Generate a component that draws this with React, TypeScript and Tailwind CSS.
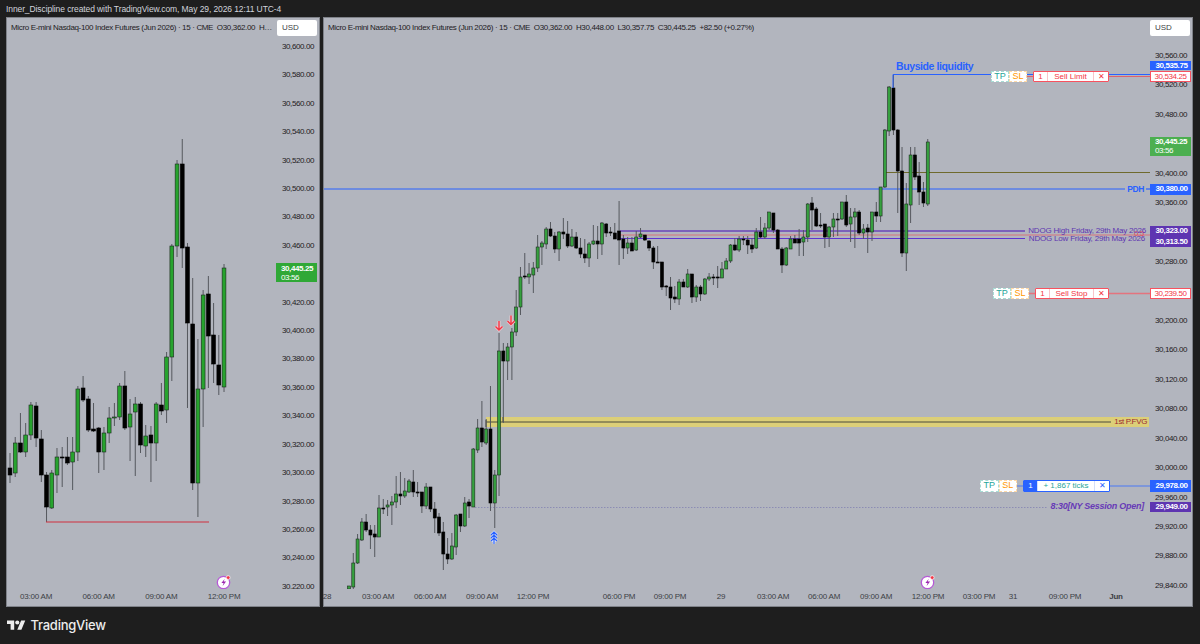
import React from "react";

// [bodyTop, bodyBottom, wickTop, wickBottom, up] in page pixels
type Candle = [number, number, number, number, number];

const leftCandles: Candle[] = [
  [468, 475, 453, 483, 0],
  [443, 473, 437, 477, 1],
  [443, 452, 413, 453, 0],
  [435, 452, 423, 457, 1],
  [405, 435, 402, 440, 1],
  [406, 438, 402, 447, 0],
  [439, 475, 430, 482, 0],
  [475, 507, 472, 522, 0],
  [473, 508, 470, 509, 1],
  [457, 475, 448, 493, 1],
  [457, 458, 447, 487, 0],
  [457, 463, 437, 465, 0],
  [452, 462, 437, 490, 1],
  [389, 452, 386, 461, 1],
  [388, 400, 376, 402, 0],
  [399, 430, 396, 432, 0],
  [429, 431, 403, 432, 0],
  [428, 452, 427, 473, 0],
  [433, 452, 427, 470, 1],
  [418, 433, 407, 443, 1],
  [417, 418, 403, 426, 1],
  [386, 417, 383, 420, 1],
  [386, 428, 371, 430, 0],
  [414, 427, 399, 461, 1],
  [404, 412, 397, 476, 1],
  [404, 445, 402, 453, 0],
  [436, 446, 425, 457, 1],
  [435, 443, 426, 482, 0],
  [404, 443, 402, 461, 1],
  [405, 411, 383, 415, 0],
  [357, 410, 352, 423, 1],
  [246, 357, 244, 381, 1],
  [164, 246, 160, 257, 1],
  [164, 248, 139, 268, 0],
  [247, 323, 243, 408, 0],
  [324, 483, 278, 490, 0],
  [389, 483, 339, 517, 1],
  [295, 389, 290, 427, 1],
  [294, 336, 276, 388, 0],
  [335, 364, 303, 383, 0],
  [365, 385, 335, 395, 0],
  [268, 387, 264, 392, 1],
];

const rightCandles: Candle[] = [
  [586, 589, 586, 589, 1], [563, 587, 553, 589, 1], [539, 563, 534, 564, 1], [522, 540, 518, 541, 1],
  [522, 530, 514, 532, 0], [530, 535, 525, 549, 0], [534, 537, 525, 557, 0], [508, 537, 495, 537, 1],
  [508, 509, 499, 514, 0], [505, 507, 500, 516, 1], [502, 505, 496, 525, 1], [494, 502, 476, 508, 1],
  [494, 496, 472, 505, 0], [491, 496, 478, 498, 1], [481, 492, 479, 493, 1], [482, 492, 470, 497, 0],
  [492, 493, 482, 497, 0], [492, 506, 492, 513, 0], [487, 506, 483, 509, 1], [487, 509, 487, 512, 0],
  [509, 518, 502, 533, 0], [517, 533, 513, 536, 0], [532, 554, 522, 570, 0], [554, 559, 538, 564, 0],
  [546, 559, 533, 560, 1], [515, 547, 514, 555, 1], [514, 526, 514, 532, 0], [503, 526, 497, 527, 1],
  [502, 506, 499, 518, 0], [449, 507, 448, 507, 1], [428, 450, 419, 453, 1], [428, 442, 401, 447, 0],
  [429, 443, 419, 445, 1], [429, 503, 386, 511, 0], [475, 503, 470, 528, 1], [351, 475, 333, 496, 1],
  [351, 361, 343, 423, 0], [347, 361, 343, 380, 1], [332, 347, 328, 380, 1], [307, 332, 290, 336, 1],
  [277, 307, 267, 315, 1], [276, 277, 253, 279, 0], [274, 277, 263, 284, 1], [268, 275, 262, 293, 1],
  [247, 268, 235, 272, 1], [243, 247, 241, 265, 1], [229, 244, 227, 249, 1], [229, 236, 222, 237, 0],
  [236, 249, 232, 253, 0], [232, 249, 231, 261, 1], [232, 234, 218, 239, 0], [234, 246, 221, 248, 0],
  [237, 246, 229, 247, 1], [237, 248, 232, 249, 0], [248, 254, 238, 258, 0], [254, 258, 239, 263, 0],
  [244, 258, 242, 267, 1], [241, 244, 225, 245, 1], [241, 244, 226, 259, 0], [223, 244, 222, 255, 1],
  [224, 233, 223, 237, 0], [232, 233, 227, 236, 0], [233, 239, 223, 239, 0], [231, 240, 201, 265, 0],
  [239, 248, 235, 259, 0], [243, 248, 237, 254, 1], [243, 251, 237, 251, 0], [237, 250, 231, 251, 1],
  [234, 237, 228, 238, 1], [235, 240, 235, 241, 0], [241, 248, 240, 251, 0], [248, 262, 246, 269, 0],
  [262, 263, 246, 263, 0], [262, 287, 262, 290, 0], [286, 287, 285, 296, 0], [287, 298, 277, 310, 0],
  [297, 299, 286, 303, 0], [282, 299, 279, 305, 1], [282, 287, 279, 287, 0], [274, 287, 269, 288, 1],
  [274, 297, 274, 303, 0], [287, 297, 285, 302, 1], [287, 294, 285, 301, 0], [279, 294, 278, 295, 1],
  [277, 279, 273, 281, 1], [277, 278, 274, 285, 0], [277, 278, 266, 288, 0], [269, 278, 262, 278, 1],
  [261, 269, 258, 269, 1], [245, 261, 244, 263, 1], [245, 250, 238, 251, 0], [239, 250, 236, 252, 1],
  [239, 240, 236, 245, 0], [240, 245, 236, 254, 0], [245, 249, 238, 253, 0], [232, 248, 228, 249, 1],
  [232, 237, 217, 238, 0], [228, 237, 223, 239, 1], [212, 228, 212, 230, 1], [213, 230, 213, 233, 0],
  [230, 249, 229, 249, 0], [249, 265, 247, 273, 0], [248, 265, 247, 266, 1], [239, 249, 236, 249, 1],
  [239, 243, 235, 243, 0], [239, 243, 229, 256, 0], [237, 242, 230, 256, 1], [204, 237, 203, 242, 1],
  [203, 210, 197, 230, 0], [209, 226, 207, 227, 0], [225, 226, 213, 228, 0], [224, 237, 224, 248, 0],
  [227, 237, 226, 247, 1], [219, 227, 213, 237, 1], [219, 220, 213, 236, 0], [202, 219, 202, 220, 1],
  [202, 225, 195, 227, 0], [217, 224, 208, 242, 1], [212, 217, 208, 248, 1], [212, 233, 210, 235, 0],
  [229, 233, 224, 239, 1], [228, 232, 224, 253, 0], [212, 232, 212, 241, 1], [212, 216, 202, 222, 0],
  [187, 216, 187, 222, 1], [130, 187, 129, 188, 1], [87, 131, 86, 136, 1], [88, 130, 75, 135, 0],
  [130, 171, 129, 213, 0], [171, 253, 147, 257, 0], [204, 253, 183, 271, 1], [155, 205, 147, 223, 1],
  [155, 177, 147, 180, 0], [176, 192, 162, 205, 0], [192, 203, 182, 207, 0], [142, 204, 139, 206, 1],
];

const leftPrices = [
  "30,600.00", "30,580.00", "30,560.00", "30,540.00", "30,520.00", "30,500.00", "30,480.00",
  "30,460.00", "", "30,420.00", "30,400.00", "30,380.00", "30,360.00", "30,340.00", "30,320.00",
  "30,300.00", "30,280.00", "30,260.00", "30,240.00", "30,220.00",
];

const rightPrices = [
  "30,560.00", "30,520.00", "30,480.00", "", "30,400.00", "30,360.00", "", "30,280.00", "",
  "30,200.00", "30,160.00", "30,120.00", "30,080.00", "30,040.00", "30,000.00", "29,960.00",
  "29,920.00", "29,880.00", "29,840.00",
];

const leftTimes = [
  { label: "03:00 AM", cls: "w-[62.7px]" },
  { label: "06:00 AM", cls: "w-[62.7px]" },
  { label: "09:00 AM", cls: "w-[62.7px]" },
  { label: "12:00 PM", cls: "w-[62.7px]" },
];

// each cell is as wide as the distance to the next tick
const rightTimes = [
  { label: "28", cls: "w-[51px]" },
  { label: "03:00 AM", cls: "w-[52px]" },
  { label: "06:00 AM", cls: "w-[52px]" },
  { label: "09:00 AM", cls: "w-[51px]" },
  { label: "12:00 PM", cls: "w-[86px]" },
  { label: "06:00 PM", cls: "w-[51px]" },
  { label: "09:00 PM", cls: "w-[51px]" },
  { label: "29", cls: "w-[52px]" },
  { label: "03:00 AM", cls: "w-[51px]" },
  { label: "06:00 AM", cls: "w-[52px]" },
  { label: "09:00 AM", cls: "w-[52px]" },
  { label: "12:00 PM", cls: "w-[51px]" },
  { label: "03:00 PM", cls: "w-[34px]" },
  { label: "31", cls: "w-[52px]" },
  { label: "09:00 PM", cls: "w-[51px]" },
  { label: "Jun", cls: "w-[30px] font-bold" },
];

function Candles({ data, start, step, width, green }: { data: Candle[]; start: number; step: number; width: number; green: string }) {
  return (
    <>
      {data.map(([top, bottom, high, low, up], i) => {
        const x = start + i * step;
        return (
          <g key={i}>
            <line x1={x} x2={x} y1={high} y2={low} stroke="#55585e" strokeWidth="1" />
            <rect
              x={x - width / 2}
              y={top}
              width={width}
              height={Math.max(bottom - top, 1)}
              fill={up ? green : "#000000"}
              stroke={up ? "#1c2a1e" : "#000000"}
              strokeWidth="0.6"
            />
          </g>
        );
      })}
    </>
  );
}

function SignalIcon({ className }: { className: string }) {
  return (
    <svg viewBox="0 0 16 16" className={`absolute h-4 w-4 ${className}`}>
      <circle cx="7.5" cy="8.5" r="6.2" fill="#ffffff" stroke="#b65ad6" strokeWidth="1.3" />
      <path d="M8.8 4.8 5.4 9h2.2l-1 3 3.5-4.4H7.7z" fill="#9c27b0" />
      <circle cx="12.2" cy="3.6" r="1.9" fill="#f23645" stroke="#ffffff" strokeWidth="0.7" />
    </svg>
  );
}

function TimeAxis({ items, className }: { items: { label: string; cls: string }[]; className: string }) {
  return (
    <div className={`flex h-[17px] shrink-0 items-start pt-[2px] leading-[12px] tracking-[-0.2px] text-[#3c3f45] ${className}`}>
      {items.map((t, i) => (
        <div key={i} className={`shrink-0 ${t.cls}`}>
          <span className="inline-block -translate-x-1/2 whitespace-nowrap">{t.label}</span>
        </div>
      ))}
    </div>
  );
}

function PriceColumn({ prices, className, rowClass }: { prices: string[]; className: string; rowClass: string }) {
  return (
    <div className={`absolute right-[5px] flex flex-col items-end text-[#1e2024] ${className}`}>
      {prices.map((p, i) => (
        <div key={i} className={`flex shrink-0 items-center ${rowClass}`}>
          {p}
        </div>
      ))}
    </div>
  );
}

function TitleBar({ title }: { title: React.ReactNode }) {
  return (
    <div className="absolute inset-x-0 top-0 flex h-[19px] items-center justify-between pl-[4px] pr-[2px] tracking-[-0.35px]">
      <div className="whitespace-nowrap leading-[12px] text-[#1e2024]">{title}</div>
      <div className="flex h-4 w-10 items-center rounded-[2px] bg-white pl-[5px] tracking-normal text-[#3c3f45]">USD</div>
    </div>
  );
}

function Tag({ className, children }: { className: string; children: React.ReactNode }) {
  return <div className={`flex w-[40.5px] shrink-0 items-center justify-end pr-[3px] leading-none ${className}`}>{children}</div>;
}

function ClockTag({ className }: { className: string }) {
  return (
    <div className={`absolute flex h-[19px] flex-col items-start justify-center pl-[5px] leading-[9px] text-white ${className}`}>
      <span className="font-bold">30,445.25</span>
      <span>03:56</span>
    </div>
  );
}

function Level({ className, children }: { className: string; children: React.ReactNode }) {
  return <div className={`absolute right-[1.5px] flex items-center justify-end ${className}`}>{children}</div>;
}

function TpSl({ className }: { className: string }) {
  return (
    <div className={`flex h-full text-[9px] tracking-normal ${className}`}>
      <div className="flex flex-1 items-center justify-center border border-dashed border-[#a8dcd5] bg-white text-[#26a69a]">TP</div>
      <div className="flex flex-1 items-center justify-center border border-dashed border-[#ffd9a8] bg-white text-[#ff9800]">SL</div>
    </div>
  );
}

function Order({
  className,
  border,
  divider,
  count,
  countCls,
  closeCls,
  text,
  textCls,
}: {
  className: string;
  border: string;
  divider: string;
  count: string;
  countCls: string;
  closeCls: string;
  text: string;
  textCls: string;
}) {
  return (
    <div className={`flex h-full items-stretch rounded-[1px] border bg-white tracking-normal ${border} ${className}`}>
      <div className={`flex w-[14px] items-center justify-center border-r ${divider} ${countCls}`}>{count}</div>
      <div className={`flex flex-1 items-center justify-center whitespace-nowrap ${textCls}`}>{text}</div>
      <div className={`flex w-[15px] items-center justify-center border-l ${divider} ${closeCls}`}>✕</div>
    </div>
  );
}

function LeftChart() {
  return (
    <div className="flex h-[590px] w-[314px] shrink-0 flex-col border border-[#7f8289] bg-[#b2b5be]">
      <div className="relative h-[571px] shrink-0 overflow-hidden">
        <svg viewBox="7 18 312 571" className="absolute left-0 top-0 h-[571px] w-[312px]">
          <Candles data={leftCandles} start={10} step={5.22} width={3.8} green="#27a32e" />
          <line x1="46" x2="209" y1="522" y2="522" stroke="#d0303f" strokeWidth="1.2" />
        </svg>
        <TitleBar title={<>Micro E-mini Nasdaq-100 Index Futures (Jun 2026) · 15 · CME&nbsp; O30,362.00&nbsp; H…</>} />
        <PriceColumn prices={leftPrices} className="top-[14.8px]" rowClass="h-[28.42px]" />
        <ClockTag className="left-[269px] top-[245px] w-[41px] bg-[#2fa836]" />
        <SignalIcon className="left-[209px] top-[556px]" />
      </div>
      <TimeAxis items={leftTimes} className="pl-[29px]" />
    </div>
  );
}

function RightChart() {
  return (
    <div className="flex h-[590px] w-[870px] shrink-0 flex-col border border-[#7f8289] bg-[#b2b5be]">
      <div className="relative h-[571px] shrink-0 overflow-hidden">
        <svg viewBox="324 18 868 571" className="absolute left-0 top-0 h-[571px] w-[868px]">
          <rect x="486" y="417" width="663" height="10" fill="#dccf78" />
          <line x1="486" x2="1111" y1="422" y2="422" stroke="#4a4a3c" strokeWidth="1" />
          <line x1="486" x2="486" y1="420" y2="427" stroke="#4a4a3c" strokeWidth="1" />
          <line x1="503" x2="503" y1="417" y2="422" stroke="#4a4a3c" strokeWidth="1" />
          <line x1="475" x2="1047" y1="507.5" y2="507.5" stroke="#8c8cb4" strokeWidth="1" strokeDasharray="1.5 1.5" />
          <line x1="620" x2="1025" y1="231" y2="231" stroke="#6a46b8" strokeWidth="1.3" />
          <line x1="620" x2="1150" y1="235" y2="235" stroke="#d8737c" strokeWidth="1" />
          <line x1="620" x2="1025" y1="238.5" y2="238.5" stroke="#5e35d1" strokeWidth="1" />
          <line x1="324" x2="1125" y1="189" y2="189" stroke="#2962ff" strokeWidth="1.2" />
          <line x1="1146" x2="1150" y1="189" y2="189" stroke="#2962ff" strokeWidth="1.2" />
          <line x1="886" x2="1150" y1="172.5" y2="172.5" stroke="#6f6a2c" strokeWidth="1" />
          <Candles data={rightCandles} start={349} step={4.287} width={3} green="#36a03f" />
          <path d="M893 88V74.5H991" fill="none" stroke="#2962ff" strokeWidth="1" />
          <line x1="1026" x2="1150" y1="76.5" y2="76.5" stroke="#e0606c" strokeWidth="1.2" />
          <line x1="1026" x2="1150" y1="74.5" y2="74.5" stroke="#2962ff" strokeWidth="1" />
          <line x1="1029" x2="1150" y1="293.5" y2="293.5" stroke="#e4737e" strokeWidth="1.5" />
          <line x1="1016" x2="1150" y1="486" y2="486" stroke="#4a78f5" strokeWidth="1" />
          {/* entry arrows */}
          <g fill="none" strokeWidth="3" stroke="#e9c9d0">
            <path d="M499 321v9M495.5 326.5l3.5 3.5 3.5-3.5" />
            <path d="M511 315.5v9M507.5 321l3.5 3.5 3.5-3.5" />
          </g>
          <g fill="none" stroke="#f23645" strokeWidth="1.4">
            <path d="M499 321v9M495.5 326.5l3.5 3.5 3.5-3.5" />
            <path d="M511 315.5v9M507.5 321l3.5 3.5 3.5-3.5" />
          </g>
          <path d="M494 532v12M491 535l3-3 3 3M491 538l3-3 3 3M491 541l3-3 3 3" fill="none" stroke="#d3dcf5" strokeWidth="2.6" />
          <path d="M494 532v12M491 535l3-3 3 3M491 538l3-3 3 3M491 541l3-3 3 3" fill="none" stroke="#2962ff" strokeWidth="1.1" />
        </svg>

        <TitleBar
          title={
            <>
              Micro E-mini Nasdaq-100 Index Futures (Jun 2026) · 15 · CME&nbsp; O30,362.00&nbsp; H30,448.00&nbsp; L30,357.75&nbsp; C30,445.25&nbsp; +82.50 (+0.27%)
            </>
          }
        />
        <PriceColumn prices={rightPrices} className="top-[23.28px]" rowClass="h-[29.44px]" />

        <div className="absolute left-[572px] top-[42px] whitespace-nowrap text-[10.5px] font-bold leading-[12px] text-[#2962ff]">Buyside liquidity</div>
        <div className="absolute left-[810px] top-[211px] leading-[10px] text-[#e0505c]">0.5</div>
        <div className="absolute right-[45px] top-[398px] whitespace-nowrap leading-[12px] tracking-[-0.35px] text-[#9c2a30]">1st P.FVG</div>

        <Level className="top-[43px] h-[9px]">
          <Tag className="h-full bg-[#2962ff] font-bold text-white">30,535.75</Tag>
        </Level>
        <Level className="top-[53px] h-[11px]">
          <TpSl className="mr-[6px] w-[36px]" />
          <Order className="mr-[41px] w-[76px]" border="border-[#f7525f]" divider="border-[#f9c5ca]" count="1" countCls="text-[#f23645]" closeCls="text-[#f23645]" text="Sell Limit" textCls="text-[#f23645]" />
          <Tag className="h-full border border-[#f7525f] bg-white text-[#f23645]">30,534.25</Tag>
        </Level>
        <ClockTag className="left-[826px] top-[118.5px] w-[40.5px] bg-[#4caf50]" />
        <Level className="top-[166px] h-[10.5px]">
          <span className="mr-[6px] text-[8.5px] font-bold text-[#2962ff]">PDH</span>
          <Tag className="h-full bg-[#2962ff] font-bold text-white">30,380.00</Tag>
        </Level>
        <Level className="top-[208px] h-[10.5px]">
          <span className="mr-[4px] whitespace-nowrap tracking-[-0.2px] text-[#5e35b1]">NDOG High Friday, 29th May 2026</span>
          <Tag className="h-full bg-[#5e35b1] font-bold text-white">30,323.00</Tag>
        </Level>
        <Level className="top-[218px] h-[11px]">
          <span className="mb-[6px] mr-[5px] whitespace-nowrap leading-[10px] tracking-[-0.2px] text-[#5e35b1]">NDOG Low Friday, 29th May 2026</span>
          <Tag className="h-full bg-[#5e35b1] font-bold text-white">30,313.50</Tag>
        </Level>
        <Level className="top-[270px] h-[11px]">
          <TpSl className="mr-[6px] w-[36px]" />
          <Order className="mr-[41px] w-[74px]" border="border-[#f7525f]" divider="border-[#f9c5ca]" count="1" countCls="text-[#f23645]" closeCls="text-[#f23645]" text="Sell Stop" textCls="text-[#f23645]" />
          <Tag className="h-full border border-[#f7525f] bg-white text-[#f23645]">30,239.50</Tag>
        </Level>
        <Level className="top-[462px] h-[12px]">
          <TpSl className="mr-[6px] w-[37px]" />
          <Order className="mr-[40px] w-[87px]" border="border-[#2962ff]" divider="border-[#d4dffb]" count="1" countCls="bg-[#2962ff] text-white" closeCls="text-[#2962ff]" text="+ 1,867 ticks" textCls="text-[#26a69a]" />
          <Tag className="h-full bg-[#2962ff] font-bold text-white">29,978.00</Tag>
        </Level>
        <Level className="top-[484px] h-[10px]">
          <span className="mr-[6px] whitespace-nowrap text-[9px] font-bold italic tracking-[-0.25px] text-[#673ab7]">8:30[NY Session Open]</span>
          <Tag className="h-full bg-[#5e35b1] font-bold text-white">29,949.00</Tag>
        </Level>

        <SignalIcon className="left-[596px] top-[556px]" />
      </div>
      <TimeAxis items={rightTimes} className="pl-[3px]" />
    </div>
  );
}

export default function App() {
  return (
    <div className="flex h-[644px] w-[1200px] flex-col overflow-hidden bg-[#1e1e1e] font-['Liberation_Sans',sans-serif] text-[8px]">
      <div className="flex h-[17px] shrink-0 items-center pl-[6px] pt-[1px] text-[8.5px] tracking-[-0.1px] text-[#d1d4dc]">
        Inner_Discipline created with TradingView.com, May 29, 2026 12:11 UTC-4
      </div>
      <div className="flex shrink-0 gap-[3px] pl-[6px] tracking-[-0.4px]">
        <LeftChart />
        <RightChart />
      </div>
      <div className="flex flex-1 items-center gap-[5px] pb-[1px] pl-[7px] text-[#ececec]">
        <svg viewBox="0 4 36 18" className="h-[10px] w-[18.5px]" fill="currentColor">
          <path d="M14 22H7V11H0V4h14v18zM28 22h-8l7.5-18h8L28 22z" />
          <circle cx="20" cy="8" r="4" />
        </svg>
        <span className="font-['Inter',sans-serif] text-[13px] font-medium leading-none tracking-[-0.25px]">TradingView</span>
      </div>
    </div>
  );
}
